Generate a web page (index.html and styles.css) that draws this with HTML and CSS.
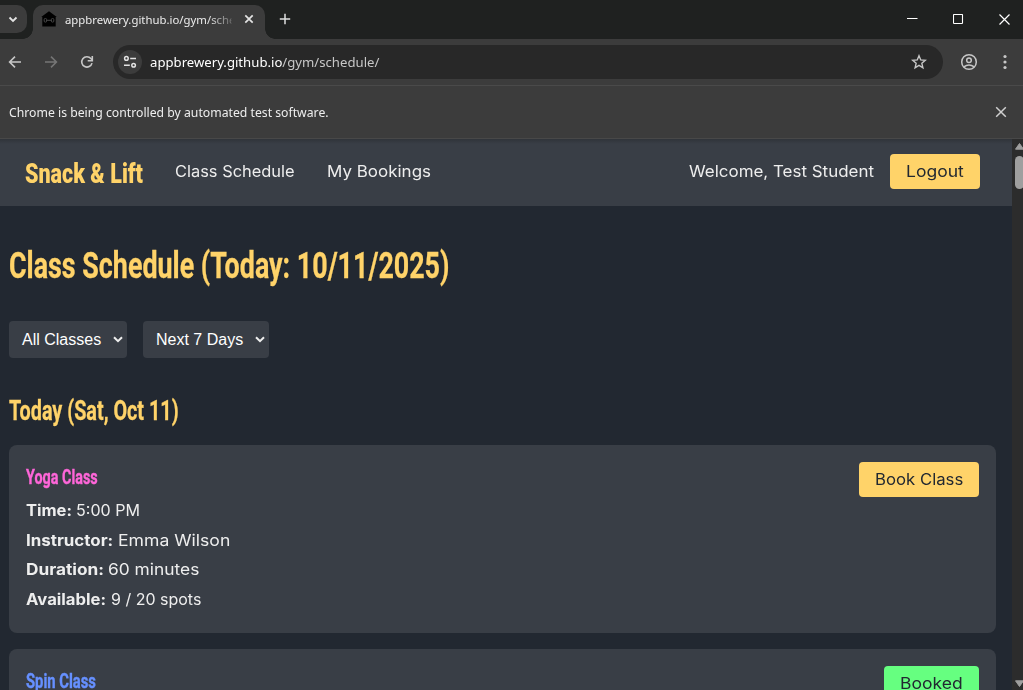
FILE: index.html
```html
<!DOCTYPE html>
<html lang="en">
<head>
<meta charset="utf-8">
<title>Snack &amp; Lift</title>
<link rel="stylesheet" href="styles.css">
</head>
<body>
<div class="window">
  <div class="tabstrip">
    <div class="tab-search"><svg width="27" height="28" viewBox="0 0 27 28"><path d="M9.5 12.5l3.5 3.5 3.5-3.5" fill="none" stroke="#e3e3e3" stroke-width="1.8"/></svg></div>
    <div class="tab">
      <svg class="favicon" width="16" height="16" viewBox="0 0 16 16"><path d="M8 .3L15.8 6H14.7v9.5H1.3V6H.2z" fill="#000"/><path d="M5.6 9.3h4.8" stroke="#484848" stroke-width="1"/><rect x="3.2" y="7.5" width="2.4" height="3.6" rx="1" fill="none" stroke="#484848"/><rect x="10.4" y="7.5" width="2.4" height="3.6" rx="1" fill="none" stroke="#484848"/></svg>
      <span class="tab-title">appbrewery.github.io/gym/sche</span>
      <svg class="tab-close" width="10" height="10" viewBox="0 0 10 10"><path d="M1.3 1.3l7.4 7.4M8.7 1.3L1.3 8.7" stroke="#e3e3e3" stroke-width="1.7"/></svg>
    </div>
    <svg class="new-tab" width="12" height="12" viewBox="0 0 12 12"><path d="M6 .8v10.4M.8 6h10.4" stroke="#e0e0e0" stroke-width="1.5"/></svg>
    <div class="controls">
      <svg width="11" height="11" viewBox="0 0 11 11"><path d="M0 4.5h10.5" stroke="#fff"/></svg>
      <svg width="11" height="11" viewBox="0 0 11 11"><rect x=".5" y=".5" width="9" height="9" rx=".6" fill="none" stroke="#fff" stroke-width="1.1"/></svg>
      <svg width="11" height="11" viewBox="0 0 11 11"><path d="M.5.5l10 10M10.5.5l-10 10" stroke="#fff" stroke-width="1.2"/></svg>
    </div>
  </div>
  <div class="toolbar">
    <svg width="14" height="14" viewBox="0 0 14 14"><path d="M13 7H2M7 1.6L1.6 7 7 12.4" fill="none" stroke="#c7c7c7" stroke-width="1.6"/></svg>
    <svg class="forward" width="14" height="14" viewBox="0 0 14 14"><path d="M1 7h11M7 1.6L12.4 7 7 12.4" fill="none" stroke="#757575" stroke-width="1.6"/></svg>
    <svg class="reload" width="14" height="14" viewBox="0 0 14 14"><path d="M12 8.1A5.2 5.2 0 1 1 10.9 3.5L12 4.8" fill="none" stroke="#c7c7c7" stroke-width="1.6"/><path d="M12.3 1v4.7H7.7" fill="none" stroke="#c7c7c7" stroke-width="1.6"/></svg>
    <div class="omnibox">
      <div class="site-info"><svg width="14" height="14" viewBox="0 0 14 14" fill="none" stroke="#e3e3e3" stroke-width="1.5"><circle cx="3.4" cy="3.4" r="1.8"/><path d="M7.2 3.4H13M1 10.2h5.8"/><circle cx="10.6" cy="10.2" r="1.8"/></svg></div>
      <span class="url">appbrewery.github.io<span class="path">/gym/schedule/</span></span>
      <svg class="star" width="16" height="16" viewBox="0 0 16 16"><path d="M8 1.7l1.75 4.2 4.6.4-3.5 3 1.05 4.5L8 11.4l-3.9 2.4 1.05-4.5-3.5-3 4.6-.4z" fill="none" stroke="#c7c7c7" stroke-width="1.4"/></svg>
    </div>
    <svg class="profile" width="18" height="18" viewBox="0 0 18 18" fill="none" stroke="#c7c7c7" stroke-width="1.5"><circle cx="9" cy="9" r="7.3"/><circle cx="9" cy="7.2" r="2.3"/><path d="M3.8 13.9Q9 10 14.2 13.9"/></svg>
    <svg class="menu" width="4" height="16" viewBox="0 0 4 16" fill="#c7c7c7"><circle cx="2" cy="2.5" r="1.6"/><circle cx="2" cy="8" r="1.6"/><circle cx="2" cy="13.5" r="1.6"/></svg>
  </div>
  <div class="infobar">
    <span class="info-text">Chrome is being controlled by automated test software.</span>
    <svg width="12" height="12" viewBox="0 0 12 12"><path d="M1.2 1.2l9.6 9.6M10.8 1.2l-9.6 9.6" stroke="#d0d0d0" stroke-width="1.5"/></svg>
  </div>
  <div class="viewport">
    <div class="page">
      <nav class="nav">
        <span class="brand">Snack &amp; Lift</span>
        <a class="link schedule">Class Schedule</a>
        <a class="link bookings">My Bookings</a>
        <span class="link welcome">Welcome, Test Student</span>
        <button class="btn logout"><span>Logout</span></button>
      </nav>
      <main class="main">
        <h1 class="title">Class Schedule (Today: 10/11/2025)</h1>
        <div class="filters">
          <div class="select classes"><span>All Classes</span><svg width="10" height="7" viewBox="0 0 10 7"><path d="M1 1.2l4 4 4-4" fill="none" stroke="#eee" stroke-width="2"/></svg></div>
          <div class="select days"><span>Next 7 Days</span><svg width="10" height="7" viewBox="0 0 10 7"><path d="M1 1.2l4 4 4-4" fill="none" stroke="#eee" stroke-width="2"/></svg></div>
        </div>
        <h2 class="day">Today (Sat, Oct 11)</h2>
        <section class="card">
          <div class="details">
            <h3 class="name yoga">Yoga Class</h3>
            <p class="row"><b class="time">Time:</b><span class="time-value">5:00 PM</span></p>
            <p class="row"><b class="instructor">Instructor:</b><span class="instructor-value">Emma Wilson</span></p>
            <p class="row"><b class="duration">Duration:</b><span class="duration-value">60 minutes</span></p>
            <p class="row"><b class="available">Available:</b><span class="available-value">9 / 20 spots</span></p>
          </div>
          <button class="btn book"><span>Book Class</span></button>
        </section>
        <section class="card">
          <div class="details"><h3 class="name spin">Spin Class</h3></div>
          <button class="btn booked"><span>Booked</span></button>
        </section>
      </main>
    </div>
    <div class="scrollbar">
      <svg width="9" height="7" viewBox="0 0 9 7"><path d="M4.5 .5L8.5 6.2h-8z" fill="#9f9f9f" stroke="#9f9f9f" stroke-linejoin="round"/></svg>
      <div class="thumb"></div>
      <svg class="down" width="9" height="7" viewBox="0 0 9 7"><path d="M4.5 6.5L8.5.8h-8z" fill="#9f9f9f" stroke="#9f9f9f" stroke-linejoin="round"/></svg>
    </div>
  </div>
</div>
</body>
</html>
```
FILE: styles.css
```css
* { box-sizing: border-box; }
body { margin: 0; overflow: hidden; background: #222831; }
svg { display: block; flex: none; }
h1, h2, h3, p { margin: 0; }
.window { width: 1023px; height: 690px; display: flex; flex-direction: column; overflow: hidden; }

/* Tab strip */
.tabstrip { height: 39px; flex: none; background: #1f2120; display: flex; align-items: flex-start; position: relative; }
.tab-search { width: 27px; height: 28px; margin-top: 5px; background: #3c3c3c; border-radius: 0 10px 10px 0; }
.tab { position: relative; width: 232px; height: 34px; margin: 5px 0 0 6px; padding: 0 11px 6px 8px; background: #3c3c3c; border-radius: 10px 10px 0 0; display: flex; align-items: center; }
.tab::before, .tab::after { content: ""; position: absolute; bottom: 0; width: 10px; height: 10px; }
.tab::before { left: -10px; background: radial-gradient(circle at 0 0, transparent 9.5px, #3c3c3c 10px); }
.tab::after { right: -10px; background: radial-gradient(circle at 100% 0, transparent 9.5px, #3c3c3c 10px); }
.tab-title { width: 170px; margin-left: 8px; padding-top: 1px; white-space: nowrap; font: 11.6px/20px "Noto Sans", sans-serif; color: #ececec; transform: scaleX(.98); transform-origin: left; -webkit-mask-image: linear-gradient(90deg, #000 145px, transparent 178px); mask-image: linear-gradient(90deg, #000 145px, transparent 178px); }
.tab-close { margin-left: auto; }
.new-tab { margin: 13px 0 0 14px; }
.controls { margin-left: auto; padding: 14px 13px 0 0; display: flex; gap: 35px; }

/* Toolbar */
.toolbar { height: 47px; flex: none; background: #3c3c3c; border-bottom: 1px solid #4a4a4a; display: flex; align-items: center; padding-left: 8px; }
.forward { margin-left: 22px; }
.reload { margin-left: 22px; }
.omnibox { width: 830px; height: 34px; margin-left: 19px; border-radius: 17px; background: #282828; display: flex; align-items: center; padding: 0 16px 0 5px; }
.site-info { width: 24px; height: 24px; border-radius: 12px; background: #3c3c3c; display: flex; align-items: center; justify-content: center; }
.url { margin-left: 8px; white-space: nowrap; font: 13px/20px "Noto Sans", sans-serif; color: #fff; transform: scaleX(1.012); transform-origin: left; }
.path { color: #c7c7c7; }
.star { margin-left: auto; }
.profile { margin-left: 17px; }
.menu { margin-left: 25px; }

/* Info bar */
.infobar { height: 53px; flex: none; background: #3c3c3c; border-bottom: 1px solid #484848; display: flex; align-items: center; justify-content: space-between; padding: 0 16px 0 9px; }
.info-text { padding-top: 2px; white-space: nowrap; font: 12.3px/20px "Noto Sans", sans-serif; color: #eee; transform: scaleX(.994); transform-origin: left; }

/* Page */
.viewport { flex: 1; min-height: 0; display: flex; }
.page { width: 1012px; background: #222831; overflow: hidden; font: 15.5px/30px Inter, sans-serif; color: #eee; }
.nav { height: 67px; background: linear-gradient(#30343a, #393e46 5px); display: flex; align-items: center; padding: 0 32px 2px 25px; }
.brand, .link, .title, .day, .name, .row b, .row span, .btn span { display: block; white-space: nowrap; transform-origin: left; }
.brand { width: 118px; padding-top: 4px; font: 900 27px/32px Roboto, sans-serif; color: #ffd369; transform: scaleX(.797); }
.schedule { width: 119px; margin-left: 32px; transform: scaleX(1.059); }
.bookings { width: 104px; margin-left: 33px; transform: scaleX(1.095); }
.welcome { width: 185px; margin: 0 16px 0 auto; transform: scaleX(1.093); }
.btn { height: 35px; padding: 0 16px; border: 0; border-radius: 4px; background: #ffd369; color: #222831; font: 15.5px/35px Inter, sans-serif; text-align: left; flex: none; }
.logout { width: 90px; }
.logout span { transform: scaleX(1.13); }
.main { padding: 42px 16px 0 9px; }
.title { width: 440px; font: 700 36px/36px Roboto, sans-serif; color: #ffd369; transform: scaleX(.746); -webkit-text-stroke: .3px #ffd369; }
.filters { display: flex; gap: 16px; margin-top: 37px; }
.select { height: 37px; border-radius: 4px; background: #393e46; display: flex; align-items: center; justify-content: space-between; padding: 0 4px 0 13px; font: 16px/37px "Liberation Sans", Arial, sans-serif; color: #fff; white-space: nowrap; }
.classes { width: 118px; }
.days { width: 126px; }
.day { width: 170px; margin: 37px 0 18px; font: 700 27px/32px Roboto, sans-serif; color: #ffd369; transform: scaleX(.733); -webkit-text-stroke: .3px #ffd369; }
.card { height: 188px; margin-bottom: 16px; padding: 17px; border-radius: 8px; background: #393e46; display: flex; justify-content: space-between; align-items: flex-start; }
.name { width: 71px; margin-bottom: 4px; font: 700 20px/30px Roboto, sans-serif; transform: scaleX(.718); -webkit-text-stroke: .4px currentColor; }
.yoga { color: #ff66d9; }
.spin { color: #6690ff; transform: scaleX(.739); }
.row { display: flex; gap: 4px; height: 29.7px; line-height: 30px; }
.row b { font-weight: 750; }
.time { width: 46px; transform: scaleX(1.067); }
.instructor { width: 88px; transform: scaleX(1.09); }
.duration { width: 78px; transform: scaleX(1.112); }
.available { width: 81px; transform: scaleX(1.075); }
.time-value { transform: scaleX(1.037); }
.instructor-value { transform: scaleX(1.135); }
.duration-value { transform: scaleX(1.12); }
.available-value { transform: scaleX(1.032); }
.book { width: 120px; }
.book span { transform: scaleX(1.08); }
.booked { width: 95px; background: #66ff80; }
.booked span { transform: scaleX(1.13); }

/* Scrollbar */
.scrollbar { width: 11px; flex: none; background: #2c2c2c; padding: 4px 0 0 3px; display: flex; flex-direction: column; overflow: hidden; }
.thumb { width: 9px; height: 33px; flex: none; margin-top: 6px; border-radius: 4.5px; background: #9f9f9f; }
.down { margin: auto 0 3px; }
```
